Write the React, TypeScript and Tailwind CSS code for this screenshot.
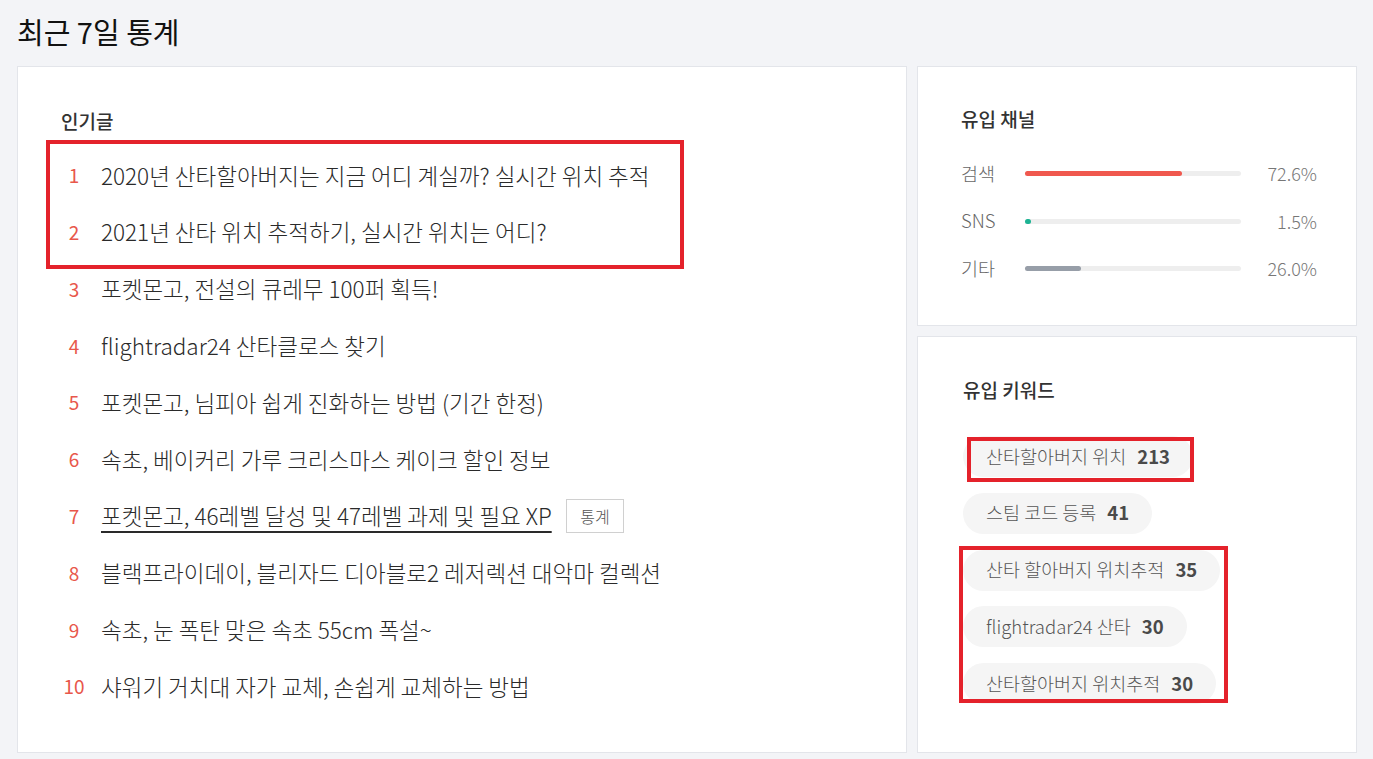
// ============================================================
// 최근 7일 통계 — 인기글 / 유입 채널 / 유입 키워드
// ============================================================

const FONT = { fontFamily: '"Noto Sans CJK KR", "Noto Sans", sans-serif' };

const POPULAR_POSTS = [
  "2020년 산타할아버지는 지금 어디 계실까? 실시간 위치 추적",
  "2021년 산타 위치 추적하기, 실시간 위치는 어디?",
  "포켓몬고, 전설의 큐레무 100퍼 획득!",
  "flightradar24 산타클로스 찾기",
  "포켓몬고, 님피아 쉽게 진화하는 방법 (기간 한정)",
  "속초, 베이커리 가루 크리스마스 케이크 할인 정보",
  "포켓몬고, 46레벨 달성 및 47레벨 과제 및 필요 XP",
  "블랙프라이데이, 블리자드 디아블로2 레저렉션 대악마 컬렉션",
  "속초, 눈 폭탄 맞은 속초 55cm 폭설~",
  "샤워기 거치대 자가 교체, 손쉽게 교체하는 방법",
];

const CHANNELS = [
  { label: "검색", value: 72.6, bar: "bg-[#f0584e]" },
  { label: "SNS", value: 1.5, bar: "bg-[#1db393]" },
  { label: "기타", value: 26.0, bar: "bg-[#979ea8]" },
];

const KEYWORDS = [
  { word: "산타할아버지 위치", count: 213 },
  { word: "스팀 코드 등록", count: 41 },
  { word: "산타 할아버지 위치추적", count: 35 },
  { word: "flightradar24 산타", count: 30 },
  { word: "산타할아버지 위치추적", count: 30 },
];

function PopularPosts() {
  return (
    <section className="h-[687px] border border-[#e3e5ea] bg-white pl-[43px] pt-[40px]">
      <h3 className="text-[19px] leading-[28px] font-medium text-[#333]">인기글</h3>
      <ul className="mt-[12px] flex flex-col">
        {POPULAR_POSTS.map((title, i) => (
          <li key={i} className="flex h-[56.8px] items-center">
            <span className="w-[26px] text-center text-[19px] text-[#e8574b]">{i + 1}</span>
            <span
              className={
                "ml-[14px] text-[22.5px] font-light text-[#2a2a2a] " +
                (i === 6 ? "underline decoration-[1.5px] underline-offset-[6px]" : "")
              }
            >
              {title}
            </span>
            {i === 6 && (
              <button className="ml-[14px] h-[34px] border border-[#d0d0d0] bg-white px-[13.5px] text-[16px] font-light text-[#555]">
                통계
              </button>
            )}
          </li>
        ))}
      </ul>
    </section>
  );
}

function Channels() {
  return (
    <section className="h-[260px] border border-[#e3e5ea] bg-white pr-[39px] pl-[43px] pt-[38px]">
      <h3 className="text-[19px] leading-[28px] font-medium text-[#333]">유입 채널</h3>
      <div className="mt-[17px] flex flex-col">
        {CHANNELS.map((c) => (
          <div key={c.label} className="flex h-[47.5px] items-center">
            <span className="w-[64px] text-[18.5px] font-light text-[#666]">{c.label}</span>
            <div className="h-[5px] w-[216px] rounded-full bg-[#eeeeee]">
              <div
                className={"h-[5px] min-w-[6px] rounded-full " + c.bar}
                style={{ width: `${c.value}%` }}
              />
            </div>
            <span className="flex-1 text-right text-[18px] font-light text-[#777]">
              {c.value.toFixed(1)}%
            </span>
          </div>
        ))}
      </div>
    </section>
  );
}

function Keywords() {
  return (
    <section className="h-[417px] border border-[#e3e5ea] bg-white pl-[45px] pt-[39px]">
      <h3 className="text-[19px] leading-[28px] font-medium text-[#333]">유입 키워드</h3>
      <div className="mt-[32px] flex flex-col items-start gap-[15.75px]">
        {KEYWORDS.map((k, i) => (
          <span
            key={i}
            className="flex h-[41px] items-center gap-[11px] rounded-full bg-[#f5f5f5] px-[23px] text-[18.5px] font-light text-[#555]"
          >
            {k.word}
            <b className="font-semibold text-[#4a4a4a]">{k.count}</b>
          </span>
        ))}
      </div>
    </section>
  );
}

export default function App() {
  return (
    <div className="relative min-h-screen bg-[#f3f4f7] px-[17px] pb-[6px]" style={FONT}>
      <h1 className="pt-[11px] text-[29px] leading-[40px] text-[#111]">최근 7일 통계</h1>
      <div className="mt-[15px] grid grid-cols-[890px_440px] gap-[10px]">
        <PopularPosts />
        <div className="flex flex-col gap-[10px]">
          <Channels />
          <Keywords />
        </div>
      </div>

      {/* annotation boxes */}
      <div className="pointer-events-none absolute top-[140px] left-[46px] h-[129px] w-[638px] border-[4px] border-[#e4222b]" />
      <div className="pointer-events-none absolute top-[437px] left-[967px] h-[45px] w-[227px] border-[4px] border-[#e4222b]" />
      <div className="pointer-events-none absolute top-[546px] left-[959px] h-[157px] w-[269px] border-[4px] border-[#e4222b]" />
    </div>
  );
}
